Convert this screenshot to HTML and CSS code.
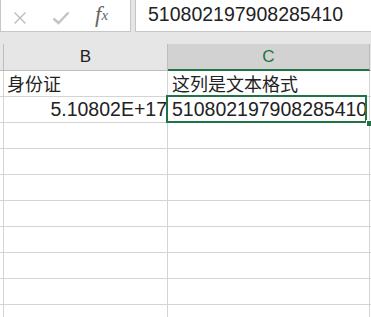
FILE: index.html
```html
<!DOCTYPE html>
<html lang="zh">
<head>
    <meta charset="UTF-8">
    <title>身份证 - 工作表</title>
    <meta name="viewport" content="width=device-width, initial-scale=1">
    <link rel="stylesheet" href="styles.css">
</head>
<body>
    <div class="formula-bar">
        <div class="fb-buttons">
            <span class="fb-btn">
                <svg width="14" height="14" viewBox="0 0 14 14"><path d="M1.5 1.5 L12.5 12.5 M12.5 1.5 L1.5 12.5" stroke="#bdbdbd" stroke-width="1.4" fill="none"/></svg>
            </span>
            <span class="fb-btn">
                <svg width="18" height="14" viewBox="0 0 18 14"><path d="M1.5 7.5 L6.5 12 L16.5 1.5" stroke="#c4c4c4" stroke-width="2.4" fill="none"/></svg>
            </span>
            <span class="fb-btn fx">f<sub>x</sub></span>
        </div>
        <div class="fb-input">510802197908285410</div>
    </div>

    <div class="sheet">
        <div class="row head">
            <div class="cell rh"></div>
            <div class="cell b">B</div>
            <div class="cell c active">C</div>
            <div class="cell rest"></div>
        </div>
        <div class="row">
            <div class="cell rh"></div>
            <div class="cell b cjk">身份证</div>
            <div class="cell c cjk">这列是文本格式</div>
            <div class="cell rest"></div>
        </div>
        <div class="row">
            <div class="cell rh"></div>
            <div class="cell b num">5.10802E+17</div>
            <div class="cell c selected">510802197908285410<span class="sel-box"></span><span class="fill-handle"></span></div>
            <div class="cell rest"></div>
        </div>
        <div class="row"><div class="cell rh"></div><div class="cell b"></div><div class="cell c"></div><div class="cell rest"></div></div>
        <div class="row"><div class="cell rh"></div><div class="cell b"></div><div class="cell c"></div><div class="cell rest"></div></div>
        <div class="row"><div class="cell rh"></div><div class="cell b"></div><div class="cell c"></div><div class="cell rest"></div></div>
        <div class="row"><div class="cell rh"></div><div class="cell b"></div><div class="cell c"></div><div class="cell rest"></div></div>
        <div class="row"><div class="cell rh"></div><div class="cell b"></div><div class="cell c"></div><div class="cell rest"></div></div>
        <div class="row"><div class="cell rh"></div><div class="cell b"></div><div class="cell c"></div><div class="cell rest"></div></div>
        <div class="row"><div class="cell rh"></div><div class="cell b"></div><div class="cell c"></div><div class="cell rest"></div></div>
        <div class="row"><div class="cell rh"></div><div class="cell b"></div><div class="cell c"></div><div class="cell rest"></div></div>
    </div>
</body>
</html>
```

FILE: styles.css
```css
body {
    margin: 0;
    background: #e6e6e6;
    font-family: "Liberation Sans", "Noto Sans CJK SC", Arial, sans-serif;
    color: #222;
    width: 371px;
    height: 317px;
    overflow: hidden;
}
.formula-bar {
    display: flex;
    gap: 4px;
    height: 32px;
}
.fb-buttons {
    width: 131px;
    background: #fff;
    border: 1px solid #c6c6c6;
    border-top: none;
    display: flex;
    align-items: center;
    padding-top: 5px;
    box-sizing: border-box;
}
.fb-btn {
    display: flex;
    align-items: center;
    justify-content: center;
}
.fb-btn:nth-child(1) { margin-left: 12px; }
.fb-btn:nth-child(2) { margin-left: 25px; }
.fx {
    margin-left: 25px;
    font-family: "Liberation Serif", "DejaVu Serif", serif;
    font-style: italic;
    font-size: 23px;
    color: #666;
    margin-top: -6px;
}
.fx sub {
    font-size: 15px;
    vertical-align: -2px;
}
.fb-input {
    flex: 1;
    background: #fff;
    border: 1px solid #c6c6c6;
    border-top: none;
    border-right: none;
    padding: 3px 0 0 12px;
    font-size: 19.5px;
    line-height: 22px;
    color: #222;
}
.sheet {
    margin-top: 12px;
}
.row {
    display: flex;
    height: 26px;
    box-sizing: border-box;
    border-bottom: 1px solid #d4d4d4;
}
.cell {
    box-sizing: border-box;
    border-right: 1px solid #d4d4d4;
    white-space: nowrap;
    font-size: 19.5px;
    line-height: 25px;
    position: relative;
}
.rh { width: 4px; }
.b { width: 164px; padding-left: 3px; }
.c { width: 202px; padding-left: 4px; }
.rest { flex: 1; border-right: none; }
.row.head {
    height: 27px;
    background: #e6e6e6;
    border-bottom: 1px solid #bdbdbd;
}
.head .cell {
    font-size: 17px;
    line-height: 26px;
    text-align: center;
    border-right-color: #bdbdbd;
    padding: 0;
    color: #222;
}
.head .active {
    background: #d2d2d2;
    color: #217346;
    border-bottom: 2px solid #217346;
    height: 27px;
}
.row:not(.head) { background: #fff; }
.cjk {
    font-family: "Noto Sans CJK SC", sans-serif;
    font-size: 18px;
}
.num {
    text-align: right;
    padding-right: 0;
}
.selected { z-index: 2; }
.sel-box {
    position: absolute;
    left: -2px;
    top: -2px;
    width: 201px;
    height: 28px;
    border: 2px solid #217346;
    box-sizing: border-box;
}
.fill-handle {
    position: absolute;
    left: 198px;
    top: 23px;
    width: 5px;
    height: 5px;
    background: #217346;
    border-left: 1px solid #fff;
    border-top: 1px solid #fff;
}
```
